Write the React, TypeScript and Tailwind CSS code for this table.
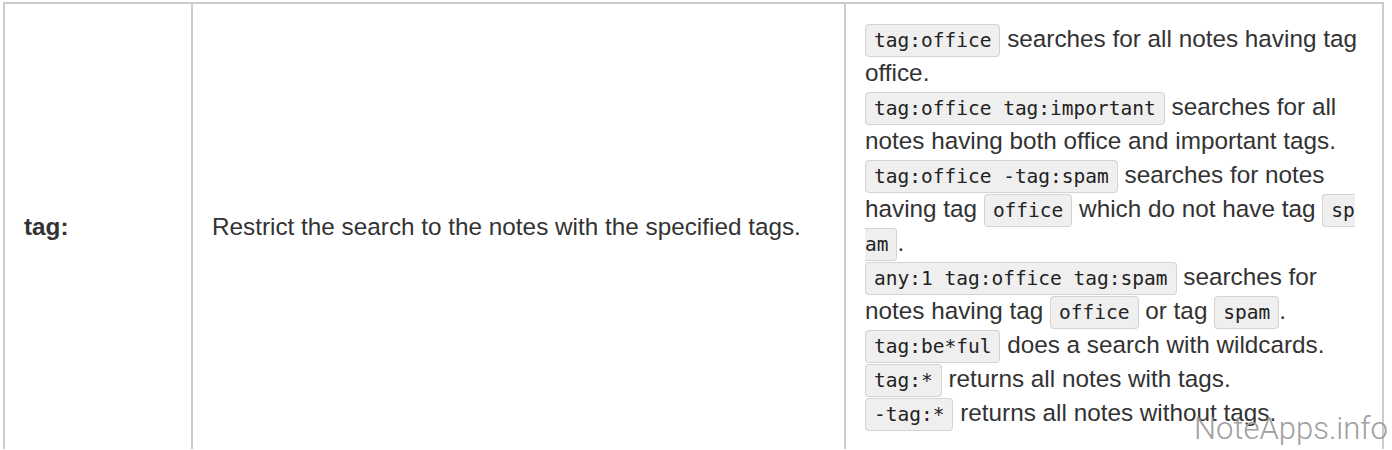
import type { ReactNode } from 'react';

function Code({ children }: { children: ReactNode }) {
  return (
    <code className="break-all rounded-[4px] border border-[#d3d3d3] bg-[#efefef] px-[8px] py-[4px] font-['DejaVu_Sans_Mono',monospace] text-[19.5px] leading-none text-[#222]">
      {children}
    </code>
  );
}

export default function App() {
  return (
    <div className="relative h-[450px] overflow-hidden bg-white font-['Liberation_Sans',Arial,sans-serif] text-[24.3px] leading-[34px] text-[#333]">
      <div className="ml-[3px] mt-[2px] flex w-[1381px] border-l-2 border-t-2 border-[#cccccc]">
        <div className="flex w-[188px] shrink-0 items-center border-r-2 border-[#cccccc] px-[19px] font-bold">tag:</div>
        <div className="flex w-[653px] shrink-0 items-center border-r-2 border-[#cccccc] px-[19px]">
          Restrict the search to the notes with the specified tags.
        </div>
        <div className="w-[538px] shrink-0 border-r-2 border-[#cccccc] px-[19px] pb-[19px] pt-[18px]">
          <div>
            <Code>tag:office</Code> searches for all notes having tag office.
          </div>
          <div>
            <Code>tag:office tag:important</Code> searches for all notes having both office and important tags.
          </div>
          <div>
            <Code>tag:office -tag:spam</Code> searches for notes having tag <Code>office</Code> which do not have tag{' '}
            <Code>spam</Code>.
          </div>
          <div>
            <Code>any:1 tag:office tag:spam</Code> searches for notes having tag <Code>office</Code> or tag{' '}
            <Code>spam</Code>.
          </div>
          <div>
            <Code>tag:be*ful</Code> does a search with wildcards.
          </div>
          <div>
            <Code>tag:*</Code> returns all notes with tags.
          </div>
          <div>
            <Code>-tag:*</Code> returns all notes without tags.
          </div>
        </div>
      </div>
      <div className="absolute bottom-[3px] right-[4px] font-['Roboto',sans-serif] text-[31px] font-light leading-[36px] text-[#a0a0a0]">
        NoteApps.info
      </div>
    </div>
  );
}
